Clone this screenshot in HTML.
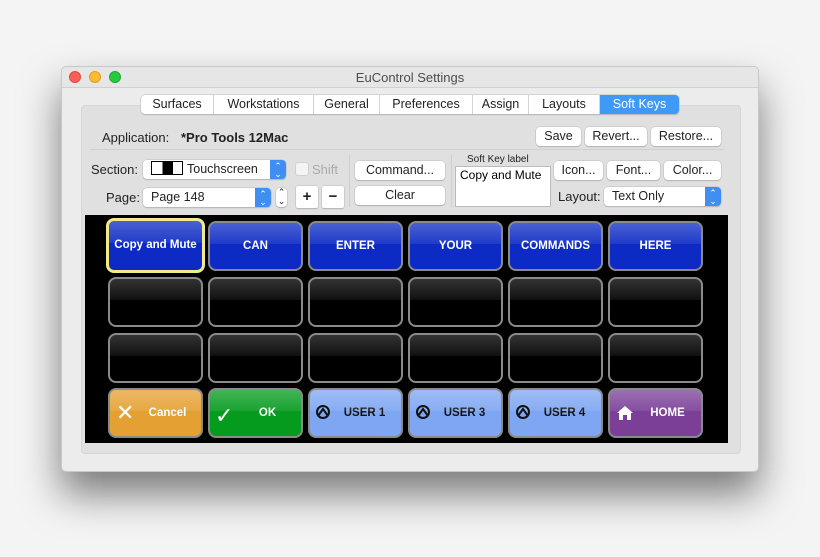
<!DOCTYPE html>
<html><head><meta charset="utf-8"><style>
*{box-sizing:border-box;margin:0;padding:0}
body{width:820px;height:557px;background:#f4f4f4;font-family:"Liberation Sans",sans-serif;position:relative;overflow:hidden}
.win{position:absolute;left:61px;top:66px;width:698px;height:406px;background:#ececec;border:1px solid #c8c8c8;border-radius:5px;box-shadow:0 22px 40px rgba(0,0,0,.5)}
.title{position:absolute;left:0;top:0;width:100%;height:21px;background:#e6e6e6;border-bottom:1px solid #d0d0d0;border-radius:5px 5px 0 0;text-align:center;font-size:13px;line-height:21px;color:#4d4d4d}
.dot{position:absolute;top:4px;width:12px;height:12px;border-radius:50%}
.panel{position:absolute;left:19px;top:38px;width:660px;height:349px;background:#e0e0e0;border-radius:4px;border:1px solid #d6d6d6}
.tabs{position:absolute;left:141px;top:95px;height:19px;display:flex;background:#fff;border-radius:4px;box-shadow:0 0 0 .5px #bbb,0 1px 1px #aaa;font-size:12.5px;line-height:19px;color:#222}
.tabs div{text-align:center;border-right:1px solid #d4d4d4;white-space:nowrap}
.tabs div.on{background:#3f9af7;color:#fff;border-radius:0 4px 4px 0;border:none}
.t{position:absolute;font-size:13px;color:#222;white-space:nowrap}
.btn{position:absolute;height:19px;background:#fff;border-radius:4px;box-shadow:0 0 0 .5px #bbb,0 1px 1px #aaa;font-size:12.5px;line-height:19px;text-align:center;color:#222;white-space:nowrap}
.sel{position:absolute;height:19px;background:#fff;border-radius:4px;box-shadow:0 0 0 .5px #bbb,0 1px 1px #aaa;font-size:12.5px;line-height:19px;color:#222;padding-left:8px;white-space:nowrap}
.sel .ar{position:absolute;right:0;top:0;width:16px;height:19px;background:#3f8ff3;border-radius:0 4px 4px 0;color:#fff;font-size:9px;text-align:center;line-height:8px;padding-top:2px}
.black{position:absolute;left:85px;top:215px;width:643px;height:228px;background:#000}
.k{position:absolute;width:95px;height:50px;border-radius:8px;border:2px solid #8a8a8a;font:bold 11.5px "Liberation Sans",sans-serif;color:#fff;text-align:center;line-height:46px;overflow:hidden;white-space:nowrap}
.k:before{content:"";position:absolute;left:0;top:0;right:0;height:45%;background:linear-gradient(rgba(255,255,255,.25),rgba(255,255,255,.08))}
.bl{background:#0d2bc4}
.em{background:linear-gradient(#333,#111 45%,#000 46%)}
.em:before{display:none}
.or{background:#e5a033}.gr{background:#059b1f}.lb{background:#7ea6f2;color:#111}.pu{background:#7b3f98}
.hr{position:absolute;height:1px;background:#cfcfcf}
</style></head><body>
<div class="win">
<div class="title">EuControl Settings</div>
<div class="dot" style="left:7px;background:#fc5f57;border:.5px solid #de4a42"></div>
<div class="dot" style="left:27px;background:#fdbc2e;border:.5px solid #dd9f22"></div>
<div class="dot" style="left:47px;background:#28c840;border:.5px solid #1ea832"></div>
<div class="panel"></div>
</div>
<div class="tabs"><div style="width:73px">Surfaces</div><div style="width:100px">Workstations</div><div style="width:66px">General</div><div style="width:93px">Preferences</div><div style="width:56px">Assign</div><div style="width:71px">Layouts</div><div class="on" style="width:79px">Soft Keys</div></div>
<div class="t" style="left:102px;top:130px">Application:</div>
<div class="t" style="left:181px;top:130px;font-weight:bold">*Pro Tools 12Mac</div>
<div class="btn" style="left:536px;top:127px;width:45px">Save</div>
<div class="btn" style="left:585px;top:127px;width:62px">Revert...</div>
<div class="btn" style="left:651px;top:127px;width:70px">Restore...</div>
<div class="hr" style="left:90px;top:149px;width:634px"></div>
<div class="hr" style="left:349px;top:155px;width:1px;height:52px"></div>
<div class="hr" style="left:451px;top:155px;width:1px;height:52px"></div>
<div class="t" style="left:91px;top:162px">Section:</div>
<div class="sel" style="left:143px;top:160px;width:143px"><span style="display:inline-block;width:32px;height:14px;border:1px solid #000;vertical-align:-2px;margin-right:4px;background:linear-gradient(90deg,#fff 0 35%,#000 35% 70%,#fff 70%)"></span>Touchscreen<div class="ar">⌃<br>⌄</div></div>
<div style="position:absolute;left:295px;top:162px;width:14px;height:14px;border:1px solid #d0d0d0;border-radius:3px;background:#f4f4f4"></div>
<div class="t" style="left:312px;top:162px;color:#aaa">Shift</div>
<div class="t" style="left:106px;top:190px">Page:</div>
<div class="sel" style="left:143px;top:188px;width:128px">Page 148<div class="ar">⌃<br>⌄</div></div>
<div class="btn" style="left:276px;top:188px;width:11px;font-size:9px;line-height:9px">⌃<br>⌄</div>
<div class="btn" style="left:296px;top:186px;width:22px;height:22px;font-weight:bold;font-size:15px;line-height:22px;border-radius:2px">+</div>
<div class="btn" style="left:322px;top:186px;width:22px;height:22px;font-weight:bold;font-size:15px;line-height:22px;border-radius:2px">−</div>
<div class="btn" style="left:355px;top:161px;width:90px">Command...</div>
<div class="btn" style="left:355px;top:186px;width:90px">Clear</div>
<div class="t" style="left:467px;top:154px;font-size:10px">Soft Key label</div>
<div style="position:absolute;left:455px;top:166px;width:96px;height:41px;background:#fff;border:1px solid #bbb;font-size:12px;padding:1px 4px">Copy and Mute</div>
<div class="btn" style="left:554px;top:161px;width:49px">Icon...</div>
<div class="btn" style="left:607px;top:161px;width:53px">Font...</div>
<div class="btn" style="left:664px;top:161px;width:57px">Color...</div>
<div class="t" style="left:558px;top:189px">Layout:</div>
<div class="sel" style="left:604px;top:187px;width:117px">Text Only<div class="ar">⌃<br>⌄</div></div>
<div class="black"></div>
<div class="k bl" style="left:106px;top:218px;width:99px;height:55px;border:3px solid #f2ea8a;line-height:49px">Copy and Mute</div>
<div class="k bl" style="left:208px;top:221px">CAN</div>
<div class="k bl" style="left:308px;top:221px">ENTER</div>
<div class="k bl" style="left:408px;top:221px">YOUR</div>
<div class="k bl" style="left:508px;top:221px">COMMANDS</div>
<div class="k bl" style="left:608px;top:221px">HERE</div>
<div class="k em" style="left:108px;top:277px"></div><div class="k em" style="left:208px;top:277px"></div><div class="k em" style="left:308px;top:277px"></div><div class="k em" style="left:408px;top:277px"></div><div class="k em" style="left:508px;top:277px"></div><div class="k em" style="left:608px;top:277px"></div>
<div class="k em" style="left:108px;top:333px"></div><div class="k em" style="left:208px;top:333px"></div><div class="k em" style="left:308px;top:333px"></div><div class="k em" style="left:408px;top:333px"></div><div class="k em" style="left:508px;top:333px"></div><div class="k em" style="left:608px;top:333px"></div>
<div class="k or" style="left:108px;top:388px"><span style="position:absolute;left:6px;font-size:22px;font-weight:normal">✕</span><span style="padding-left:24px">Cancel</span></div>
<div class="k gr" style="left:208px;top:388px"><span style="position:absolute;left:5px;font-size:22px;font-weight:normal;top:3px">✓</span><span style="padding-left:24px">OK</span></div>
<div class="k lb" style="left:308px;top:388px"><svg style="position:absolute;left:5px;top:14px" width="16" height="16" viewBox="0 0 16 16"><path d="M8 2A6 6 0 1 0 8 14A6 6 0 1 0 8 2M3 12L8 5L13 12" fill="none" stroke="#111" stroke-width="2"/></svg><span style="padding-left:18px">USER 1</span></div>
<div class="k lb" style="left:408px;top:388px"><svg style="position:absolute;left:5px;top:14px" width="16" height="16" viewBox="0 0 16 16"><path d="M8 2A6 6 0 1 0 8 14A6 6 0 1 0 8 2M3 12L8 5L13 12" fill="none" stroke="#111" stroke-width="2"/></svg><span style="padding-left:18px">USER 3</span></div>
<div class="k lb" style="left:508px;top:388px"><svg style="position:absolute;left:5px;top:14px" width="16" height="16" viewBox="0 0 16 16"><path d="M8 2A6 6 0 1 0 8 14A6 6 0 1 0 8 2M3 12L8 5L13 12" fill="none" stroke="#111" stroke-width="2"/></svg><span style="padding-left:18px">USER 4</span></div>
<div class="k pu" style="left:608px;top:388px"><svg style="position:absolute;left:6px;top:15px" width="18" height="16" viewBox="0 0 18 16"><path d="M9 1L1 8H3V15H7V10H11V15H15V8H17Z" fill="#fff"/></svg><span style="padding-left:24px">HOME</span></div>
</body></html>
